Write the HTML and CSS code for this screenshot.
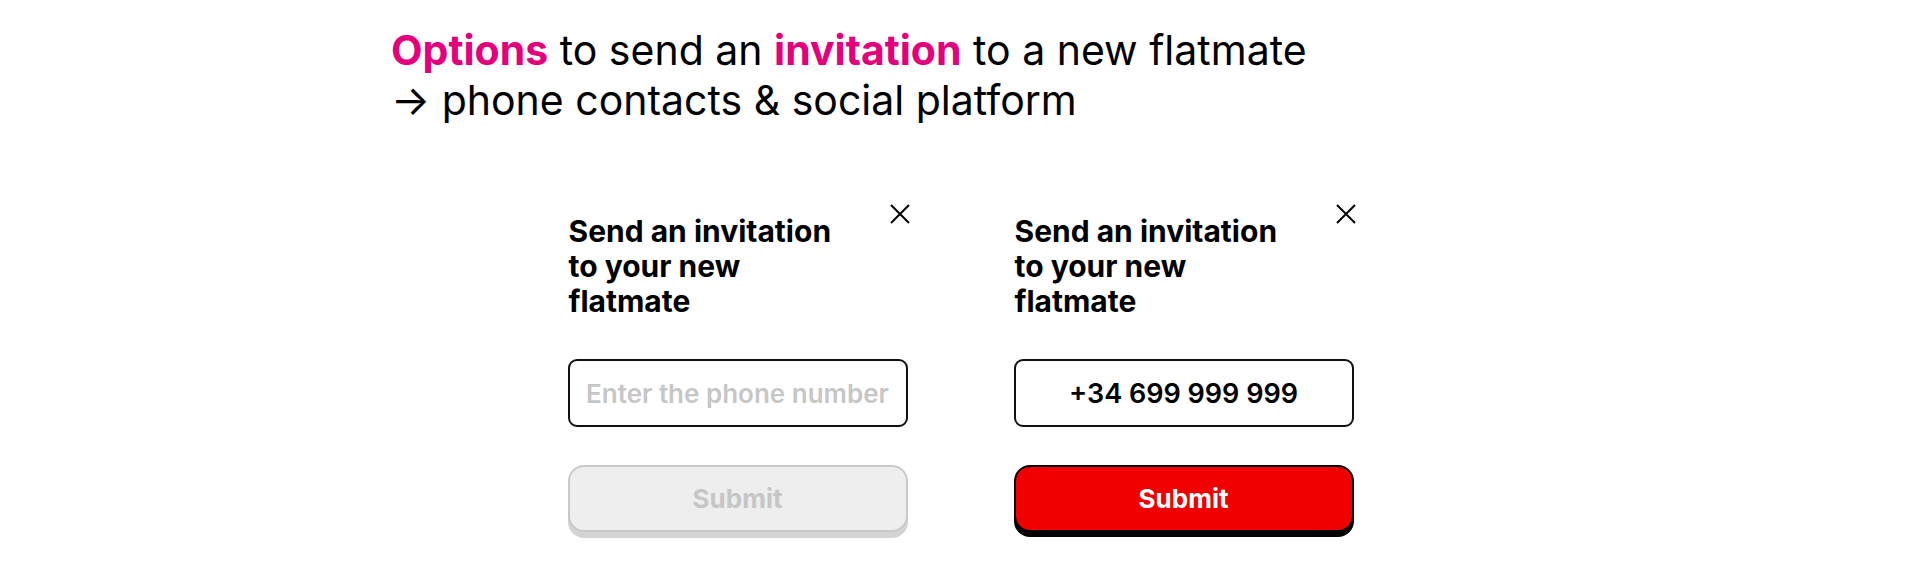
FILE: index.html
```html
<!DOCTYPE html>
<html lang="en">
<head>
<meta charset="utf-8">
<title>Invitation options</title>
<link rel="stylesheet" href="styles.css">
</head>
<body>
<main class="page">
  <header class="intro">
    <p class="intro-line"><span class="accent">Options</span> to send an <span class="accent">invitation</span> to a new flatmate</p>
    <p class="intro-line">→ phone contacts &amp; social platform</p>
  </header>

  <section class="cards">
    <div class="card">
      <div class="card-head">
        <h2 class="card-title">Send an invitation<br>to your new<br>flatmate</h2>
        <button class="close" aria-label="Close">
          <svg viewBox="0 0 22 22" width="22" height="22"><path d="M2 2 L20 20 M20 2 L2 20" stroke="#000" stroke-width="2" fill="none"/></svg>
        </button>
      </div>
      <div class="field field-empty">Enter the phone number</div>
      <button class="submit submit-disabled">Submit</button>
    </div>

    <div class="card">
      <div class="card-head">
        <h2 class="card-title">Send an invitation<br>to your new<br>flatmate</h2>
        <button class="close" aria-label="Close">
          <svg viewBox="0 0 22 22" width="22" height="22"><path d="M2 2 L20 20 M20 2 L2 20" stroke="#000" stroke-width="2" fill="none"/></svg>
        </button>
      </div>
      <div class="field field-filled">+34 699 999 999</div>
      <button class="submit submit-active">Submit</button>
    </div>
  </section>
</main>
</body>
</html>
```
FILE: styles.css
```css
* { box-sizing: border-box; }

html, body {
  margin: 0;
  padding: 0;
  background: #ffffff;
}

body {
  font-family: Inter, "Noto Sans", "Liberation Sans", sans-serif;
  color: #000;
  width: 1921px;
  height: 580px;
  overflow: hidden;
}

.page {
  padding-top: 25px;
}

.intro {
  padding-left: 391px;
}

.intro-line {
  margin: 0;
  font-size: 41px;
  line-height: 50px;
  font-weight: 400;
  color: #000;
}

.accent {
  color: #e4007c;
  font-weight: 700;
}

.cards {
  margin-top: 78px;
  display: flex;
  justify-content: center;
  gap: 106px;
}

.card {
  width: 340px;
  display: flex;
  flex-direction: column;
}

.card-head {
  display: flex;
  justify-content: space-between;
  align-items: flex-start;
}

.card-title {
  margin: 0;
  padding-top: 11px;
  padding-left: 1px;
  font-size: 30px;
  line-height: 35px;
  font-weight: 700;
}

.close {
  width: 22px;
  height: 22px;
  padding: 0;
  margin-right: -3px;
  border: 0;
  background: none;
  display: block;
}

.close svg { display: block; }

.field {
  margin-top: 40px;
  height: 68px;
  border: 2px solid #111;
  border-radius: 9px;
  display: flex;
  align-items: center;
  justify-content: center;
  font-weight: 600;
}

.field-empty {
  color: #c6c6c6;
  font-size: 26px;
}

.field-filled {
  color: #000;
  font-size: 27px;
}

.submit {
  margin-top: 38px;
  height: 67px;
  border-radius: 16px;
  font-family: inherit;
  font-size: 26px;
  font-weight: 700;
  width: 100%;
}

.submit-disabled {
  background: #eeeeee;
  border: 2px solid #c9c9c9;
  color: #c6c6c6;
  box-shadow: 0 6px 0 #d3d3d3;
}

.submit-active {
  background: #f00000;
  border: 2px solid #000;
  color: #fff;
  box-shadow: 0 5px 0 #000;
}
```
